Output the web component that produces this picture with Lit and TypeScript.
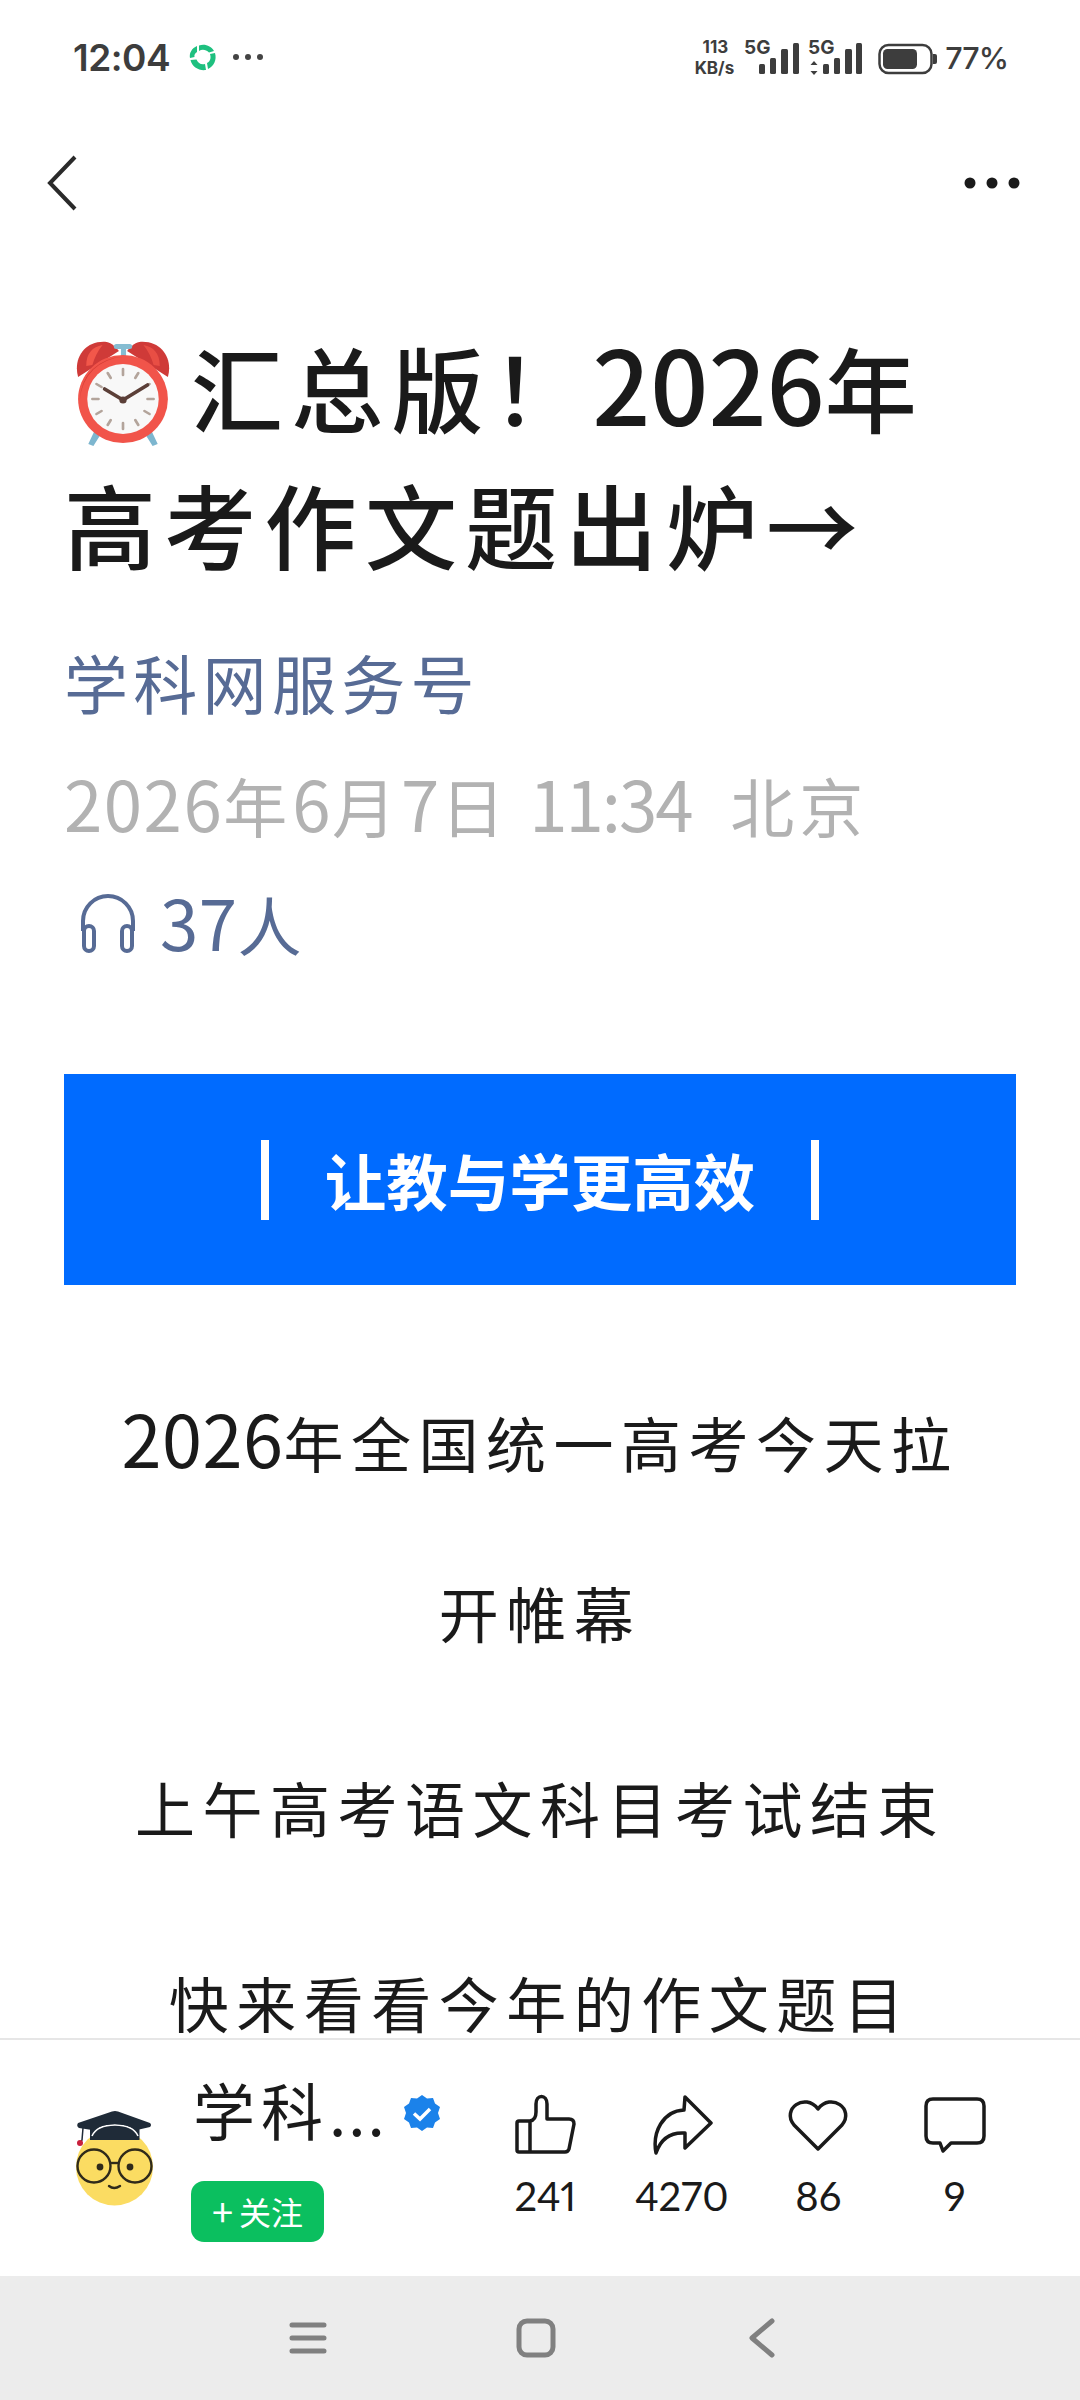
import { LitElement, html, css } from "lit";
import { customElement } from "lit/decorators.js";

@customElement("app-root")
export class AppRoot extends LitElement {
  static styles = css`
    :host { display: flex; flex-direction: column; width: 1080px; height: 2400px; background: #fff; font-family: "Noto Sans CJK SC", "Noto Sans", sans-serif; overflow: hidden; color: #1a1a1a; }
    svg { display: block; flex: none; }
    .status { height: 114px; flex: none; display: flex; align-items: center; justify-content: space-between; padding: 0 72px 0 73px; color: #3d3d3d; font-family: Inter, sans-serif; }
    .status-left { display: flex; align-items: center; }
    .time { font-size: 37px; font-weight: 600; width: 116px; letter-spacing: -0.5px; }
    .dots-small { margin-left: 15px; }
    .status-right { display: flex; align-items: center; }
    .speed { display: flex; flex-direction: column; align-items: flex-end; font-size: 17px; font-weight: 700; line-height: 21px; width: 44px; margin-top: 2px; }
    .speed span:first-child { padding-right: 6px; }
    .pct { font-size: 30.5px; font-weight: 500; margin-left: 7px; letter-spacing: -1px; margin-top: 1px; }
    .net { margin-left: 7px; }
    .nav { height: 138px; flex: none; display: flex; align-items: center; justify-content: space-between; padding: 0 60px 0 47px; }
    main { flex: 1; min-height: 0; overflow: hidden; padding: 65px 64px 0; }
    h1 { margin: 0; font-size: 92px; line-height: 137px; font-weight: 500; letter-spacing: 8.3px; color: #1a1a1a; }
    h1 svg { display: inline-block; vertical-align: -21px; margin: 0 19px 0 10px; }
    .d { line-height: 0; }
    h1 .d { font-size: 102px; letter-spacing: 0; }
    .sub { margin-top: 40px; font-size: 64px; line-height: 100px; letter-spacing: 5.3px; color: #576b95; font-weight: 400; }
    .date { margin-top: 23px; font-size: 64px; line-height: 100px; letter-spacing: 5px; color: #b2b2b2; font-weight: 400; white-space: pre; }
    .date .d { font-size: 69px; letter-spacing: 1.5px; }
    .date .t { letter-spacing: -2px; }
    .listen { margin-top: 19px; display: flex; align-items: center; gap: 22px; padding-left: 14px; font-size: 64px; line-height: 100px; letter-spacing: 3px; color: #576b95; }
    .listen .d { font-size: 69px; letter-spacing: 0.5px; }
    .banner { margin-top: 101px; height: 211px; background: #006bff; color: #fff; display: flex; align-items: center; justify-content: center; gap: 56px; font-size: 61.5px; font-weight: 700; }
    .banner i { display: block; width: 8px; height: 80px; background: #fff; }
    .body { margin-top: 72px; text-align: center; font-size: 60px; letter-spacing: 7.5px; color: #1a1a1a; }
    .body .d { font-size: 72px; letter-spacing: 0.5px; }
    .body p { margin: 0 0 25px; line-height: 170px; }
    .footer { height: 238px; flex: none; border-top: 2px solid #e6e6e6; box-sizing: border-box; display: flex; align-items: center; padding: 0 57px 0 70px; background: #fff; }
    .author { flex: 1; display: flex; flex-direction: column; align-items: flex-start; margin: -11px 0 0 31px; }
    .name { display: flex; align-items: center; font-size: 62px; line-height: 90px; letter-spacing: 6px; margin-left: 2px; }
    .name b { font-weight: 400; letter-spacing: 2px; }
    .name svg { margin-left: 16px; margin-top: 8px; }
    .follow { margin-top: 27px; width: 133px; height: 61px; border-radius: 13px; background: #0bbf5f; color: #fff; font-size: 32px; display: flex; align-items: center; justify-content: center; gap: 6px; }
    .follow b { font-weight: 400; font-size: 38px; line-height: 1; }
    .actions { display: grid; grid-template-columns: repeat(4, 136.5px); margin-top: -4px; }
    .act { display: flex; flex-direction: column; align-items: center; }
    .ico { height: 64px; display: flex; align-items: center; justify-content: center; }
    .count { font-family: Lato, sans-serif; font-feature-settings: "pnum"; font-size: 40px; line-height: 48px; margin-top: 15px; color: #1a1a1a; }
    .sysnav { height: 124px; flex: none; background: #ececec; display: flex; align-items: center; padding-left: 288px; }
    .sysnav svg:nth-child(2) { margin-left: 188px; }
    .sysnav svg:nth-child(3) { margin-left: 192px; }
  `;

  private clock() {
    return html`<svg width="98" height="108" viewBox="0 0 96 108" preserveAspectRatio="none">
      <path d="M4 38C-1 20 10 1 32 3c5 1 9 5 12 9Z" fill="#cf3a38"/>
      <path d="M92 38C97 20 86 1 64 3c-5 1-9 5-12 9Z" fill="#cf3a38"/>
      <path d="M12 27C12 14 18 8 28 6c-5 6-8 13-10 20Z" fill="#f2574a"/>
      <path d="M84 27C84 14 78 8 68 6c5 6 8 13 10 20Z" fill="#f2574a" opacity=".7"/>
      <rect x="46" y="8" width="5" height="12" fill="#86bdd2"/><rect x="39" y="5" width="18" height="5" rx="2.5" fill="#86bdd2"/>
      <path d="M20 92l-6 13 5 2 8-13ZM76 92l6 13-5 2-8-13Z" fill="#7db6cf"/>
      <circle cx="48" cy="60" r="44" fill="#f1544a"/>
      <path d="M6 60a42 42 0 0 1 42-42a44 44 0 0 0-42 42Z" fill="#d23b34"/>
      <circle cx="48" cy="60" r="35" fill="#f8f8f8"/>
      <g stroke="#b3a49b" stroke-width="2.6" stroke-linecap="round">
        <path d="M48 30v6M48 84v6M18 60h6M72 60h6M33 34l3 5M63 34l-3 5M22 45l5 3M74 45l-5 3M22 75l5-3M74 75l-5-3M33 86l3-5M63 86l-3-5"/>
      </g>
      <path d="M30 50l18 11 24-15" fill="none" stroke="#5b3f38" stroke-width="3.6" stroke-linecap="round" stroke-linejoin="round"/>
      <circle cx="48" cy="61" r="3.6" fill="#5b3f38"/>
    </svg>`;
  }

  private avatar() {
    return html`<svg width="90" height="105" viewBox="0 0 90 105">
      <circle cx="44.5" cy="61" r="38.5" fill="#fbdc62"/>
      <path d="M20 22c0 0 6-6 24.500-6s25 6 25 6v12H20Z" fill="#1f2b38"/>
      <path d="M22 30c4-9 13-11 23-11s19 2 23 11" fill="none" stroke="#fff" stroke-width="1.6"/>
      <path d="M8 17 42 5.500q3-1 6 0L80 17q2 2 0 4L67 24Q45 12 22 24L9 22q-3-2-1-5Z" fill="#1f2b38"/>
      <path d="M13 22l-1 12-2 3" fill="none" stroke="#1f2b38" stroke-width="1.5"/>
      <circle cx="10" cy="37" r="3" fill="#c8203c"/>
      <g fill="none" stroke="#2f2a1a" stroke-width="2.400">
        <circle cx="24" cy="60" r="16.500"/><circle cx="65" cy="60" r="16.500"/>
        <path d="M40.500 57h8"/>
        <path d="M39 80q5 4 11 0" stroke-linecap="round"/>
      </g>
      <circle cx="30" cy="61" r="3.400" fill="#2f2a1a"/><circle cx="60" cy="61" r="3.400" fill="#2f2a1a"/>
    </svg>`;
  }

  render() {
    return html`
      <div class="status">
        <div class="status-left">
          <span class="time">12:04</span>
          <svg width="28" height="28" viewBox="0 0 28 28" fill="none">
            <path d="M10 2.500C16 .5 22 3 25 8l-5 1.500C17 6.500 13 6 10 8Z" fill="#1ec07f"/>
            <path d="M26 10c2 7-1 13-7 16l-1-6c4-2 4-6 3-9Z" fill="#1ec07f"/>
            <path d="M17 27C10 28 3 24 1.500 17l6-.5C9 20 12 22 16 21Z" fill="#1ec07f"/>
            <path d="M1 15C0 10 3 5 8 3v6C6 10 5 12 5.500 14Z" fill="#1ec07f"/>
          </svg>
          <svg class="dots-small" width="32" height="8" viewBox="0 0 32 8" fill="#444"><circle cx="4" cy="4" r="3"/><circle cx="16" cy="4" r="3"/><circle cx="28" cy="4" r="3"/></svg>
        </div>
        <div class="status-right">
          <div class="speed"><span>113</span><span>KB/s</span></div>
          <svg class="net" width="197" height="40" viewBox="743 36 197 40">
            <g font-family="Inter, sans-serif" font-size="19" font-weight="700" fill="#3d3d3d">
              <text x="746" y="53">5G</text><text x="810" y="53">5G</text>
            </g>
            <g fill="#3d3d3d">
              <rect x="761" y="63" width="6" height="10" rx="1.500"/><rect x="772" y="57" width="6" height="16" rx="1.500"/><rect x="783" y="48" width="7" height="25" rx="1.500"/><rect x="795" y="42" width="6" height="31" rx="1.500"/>
              <path d="M816 60l3.500 4h-7ZM816 74l3.500-4h-7Z"/>
              <rect x="825" y="63" width="6" height="10" rx="1.500"/><rect x="836" y="57" width="6" height="16" rx="1.500"/><rect x="847" y="48" width="7" height="25" rx="1.500"/><rect x="858" y="42" width="6" height="31" rx="1.500"/>
              <rect x="881.500" y="44" width="52" height="28" rx="9" fill="none" stroke="#3d3d3d" stroke-width="2.500"/>
              <rect x="885" y="48" width="34" height="20" rx="4.500"/>
              <path d="M935 53h2q2 0 2 2v6q0 2-2 2h-2Z"/>
            </g>
          </svg>
          <span class="pct">77%</span>
        </div>
      </div>
      <div class="nav">
        <svg width="30" height="56" viewBox="0 0 30 56" fill="none" stroke="#2a2a2a" stroke-width="4"><path d="M28 2 3 28l25 26"/></svg>
        <svg width="56" height="12" viewBox="0 0 56 12" fill="#1a1a1a"><circle cx="6" cy="6" r="5.500"/><circle cx="28" cy="6" r="5.500"/><circle cx="50" cy="6" r="5.500"/></svg>
      </div>
      <main>
        <h1>${this.clock()}汇总版！<span class="d">2026</span>年<br>高考作文题出炉→</h1>
        <div class="sub">学科网服务号</div>
        <div class="date"><span class="d">2026</span>年<span class="d">6</span>月<span class="d">7</span>日 <span class="d t">11:34</span>  北京</div>
        <div class="listen">
          <svg width="60" height="60" viewBox="0 0 60 60" fill="none" stroke="#576b95" stroke-width="4"><path d="M5 38V28a25 25 0 0 1 50 0v10"/><rect x="6" y="33" width="10" height="25" rx="5"/><rect x="44" y="33" width="10" height="25" rx="5"/></svg>
          <span><span class="d">37</span>人</span>
        </div>
        <div class="banner"><i></i><span>让教与学更高效</span><i></i></div>
        <div class="body">
          <p><span class="d">2026</span>年全国统一高考今天拉<br>开帷幕</p>
          <p>上午高考语文科目考试结束</p>
          <p>快来看看今年的作文题目</p>
        </div>
      </main>
      <div class="footer">
        ${this.avatar()}
        <div class="author">
          <div class="name"><span>学科<b>...</b></span>
            <svg width="38" height="38" viewBox="0 0 38 38">
              <path d="M19 1l5 3.500 6-.5 2 5.500 5 3.500-2 6 2 6-5 3.500-2 5.500-6-.5-5 3.500-5-3.500-6 .5-2-5.500-5-3.500 2-6-2-6 5-3.500 2-5.500 6 .5Z" fill="#1b82ea"/>
              <path d="M11 19.500l6 5.500 10-10" fill="none" stroke="#fff" stroke-width="3.500"/>
            </svg>
          </div>
          <div class="follow"><b>+</b><span>关注</span></div>
        </div>
        <div class="actions">
          <div class="act"><div class="ico"><svg width="62" height="62" viewBox="-2 -2 62 62" fill="none" stroke="#1a1a1a" stroke-width="3.500" stroke-linejoin="round"><path d="M14 25H3q-2 0-2 2v27q0 2 2 2h46q3 0 4-3l5-25q0-5-5-5H31V8c0-10-11-10-11 0v8q0 8-6 9Zm0 0v31"/></svg></div><div class="count">241</div></div>
          <div class="act"><div class="ico"><svg width="62" height="62" viewBox="-2 -2 62 62" fill="none" stroke="#1a1a1a" stroke-width="3.500" stroke-linejoin="round"><path d="M32 1 58 27 32 52V37C18 36 8 42 3 57C-1 36 10 15 31 14Z"/></svg></div><div class="count">4270</div></div>
          <div class="act"><div class="ico"><svg width="62" height="54" viewBox="0 0 62 54" fill="none" stroke="#1a1a1a" stroke-width="3.500" stroke-linejoin="round"><path d="M31 51 7 27C-6 11 18-6 31 11 44-6 68 11 55 27Z"/></svg></div><div class="count">86</div></div>
          <div class="act"><div class="ico"><svg width="62" height="56" viewBox="0 0 62 56" fill="none" stroke="#1a1a1a" stroke-width="3.500" stroke-linejoin="round"><path d="M9 2h44q7 0 7 7v30q0 7-7 7H27l-8 8-3-8H9q-7 0-7-7V9q0-7 7-7Z"/></svg></div><div class="count">9</div></div>
        </div>
      </div>
      <div class="sysnav">
        <svg width="40" height="34" viewBox="0 0 40 34" stroke="#808080" stroke-width="5" stroke-linecap="round"><path d="M4 4h32M4 17h32M4 30h32"/></svg>
        <svg width="40" height="40" viewBox="0 0 40 40" fill="none" stroke="#808080" stroke-width="5"><rect x="3" y="3" width="34" height="34" rx="8"/></svg>
        <svg width="28" height="40" viewBox="0 0 28 40" fill="none" stroke="#808080" stroke-width="5" stroke-linecap="round" stroke-linejoin="round"><path d="M24 3 4 20l20 17"/></svg>
      </div>
    `;
  }
}
